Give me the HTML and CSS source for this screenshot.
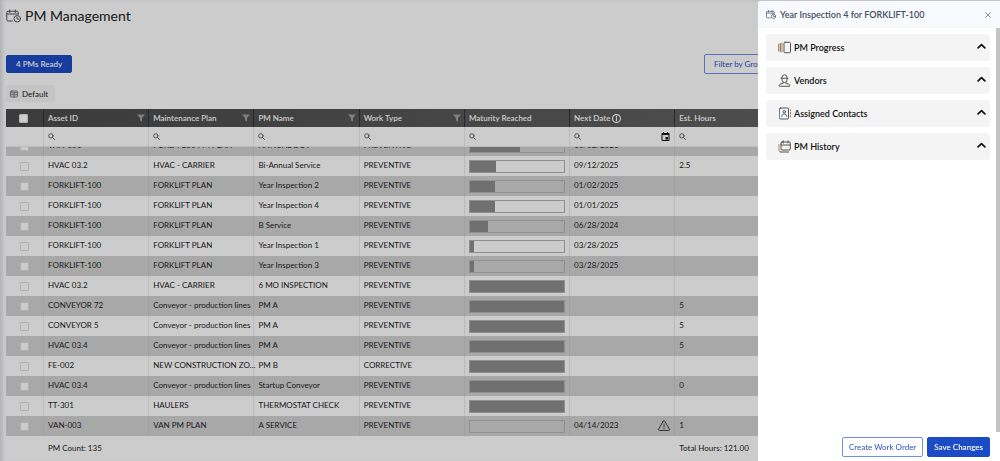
FILE: index.html
```html
<!DOCTYPE html>
<html lang="en">
<head>
<meta charset="utf-8">
<title>PM Management</title>
<link rel="stylesheet" href="styles.css">
</head>
<body>
<svg class="sprite" aria-hidden="true">
  <symbol id="i-search" viewBox="0 0 16 16"><circle cx="6.500" cy="6.500" r="5"/><path d="M10.500 10.500l4.500 4.500"/></symbol>
  <symbol id="i-filter" viewBox="0 0 16 16"><path d="M0 1h16l-6 7v7l-4-2V8z"/></symbol>
  <symbol id="i-calclock" viewBox="0 0 30 26"><path d="M13 23H4a2.500 2.500 0 0 1-2.500-2.500V6A2.500 2.500 0 0 1 4 3.500h18A2.500 2.500 0 0 1 24.500 6v3M1.500 9h23M7.500 1v5M18.500 1v5"/><circle cx="22.500" cy="18.500" r="6.500"/><path d="M22 15v4h3.500"/></symbol>
  <symbol id="i-up" viewBox="0 0 16 10"><path d="M2 8.500l6-6 6 6"/></symbol>
</svg>

<main class="page">
  <h1 class="title"><svg class="title-icon line"><use href="#i-calclock"/></svg>PM Management</h1>
  <div class="toolbar">
    <button class="btn primary" type="button">4 PMs Ready</button>
    <button class="btn outline filter-group" type="button">Filter by Group</button>
  </div>
  <div class="views">
    <button class="view" type="button"><svg class="view-icon line" viewBox="0 0 16 14"><rect x="1" y="1" width="14" height="12" rx="2"/><path d="M1 4.500h14M1 8.500h14M8 4.500V13"/></svg>Default</button>
  </div>

  <section class="grid">
    <table class="cols head">
      <colgroup><col class="c-check"><col class="c"><col class="c"><col class="c"><col class="c"><col class="c"><col class="c"><col></colgroup>
      <thead>
        <tr class="labels">
          <th><input type="checkbox" aria-label="Select all"></th>
          <th><div class="label">Asset ID<svg class="funnel"><use href="#i-filter"/></svg></div></th>
          <th><div class="label">Maintenance Plan<svg class="funnel"><use href="#i-filter"/></svg></div></th>
          <th><div class="label">PM Name<svg class="funnel"><use href="#i-filter"/></svg></div></th>
          <th><div class="label">Work Type<svg class="funnel"><use href="#i-filter"/></svg></div></th>
          <th><div class="label">Maturity Reached</div></th>
          <th><div class="label with-info">Next Date<svg class="info line" viewBox="0 0 16 16"><circle cx="8" cy="8" r="7"/><path d="M8 7v5M8 4v1"/></svg></div></th>
          <th><div class="label">Est. Hours</div></th>
        </tr>
        <tr class="filters">
          <td></td>
          <td><div class="label"><svg class="search line"><use href="#i-search"/></svg></div></td>
          <td><div class="label"><svg class="search line"><use href="#i-search"/></svg></div></td>
          <td><div class="label"><svg class="search line"><use href="#i-search"/></svg></div></td>
          <td><div class="label"><svg class="search line"><use href="#i-search"/></svg></div></td>
          <td><div class="label"><svg class="search line"><use href="#i-search"/></svg></div></td>
          <td><div class="label"><svg class="search line"><use href="#i-search"/></svg><svg class="date" viewBox="0 0 18 18"><path fill-rule="evenodd" d="M4 0h2v2h6V0h2v2h1a2 2 0 0 1 2 2v12a2 2 0 0 1-2 2H3a2 2 0 0 1-2-2V4a2 2 0 0 1 2-2h1zM3 6v10h12V6zM9 10h5v5H9z"/></svg></div></td>
          <td><div class="label"><svg class="search line"><use href="#i-search"/></svg></div></td>
        </tr>
      </thead>
    </table>

    <div class="rows">
      <table class="cols body">
        <colgroup><col class="c-check"><col class="c"><col class="c"><col class="c"><col class="c"><col class="c"><col class="c"><col></colgroup>
        <tbody>
          <tr><td><input type="checkbox" aria-label="Select row"></td><td>VAN-001</td><td>FORD F250 PM PLAN</td><td>ANNUAL DOT</td><td>PREVENTIVE</td><td><div class="bar"><div class="fill" style="width:53%"></div></div></td><td>10/02/2021</td><td></td></tr>
          <tr><td><input type="checkbox" aria-label="Select row"></td><td>HVAC 03.2</td><td>HVAC - CARRIER</td><td>Bi-Annual Service</td><td>PREVENTIVE</td><td><div class="bar"><div class="fill" style="width:28%"></div></div></td><td>09/12/2025</td><td>2.5</td></tr>
          <tr><td><input type="checkbox" aria-label="Select row"></td><td>FORKLIFT-100</td><td>FORKLIFT PLAN</td><td>Year Inspection 2</td><td>PREVENTIVE</td><td><div class="bar"><div class="fill" style="width:27%"></div></div></td><td>01/02/2025</td><td></td></tr>
          <tr><td><input type="checkbox" aria-label="Select row"></td><td>FORKLIFT-100</td><td>FORKLIFT PLAN</td><td>Year Inspection 4</td><td>PREVENTIVE</td><td><div class="bar"><div class="fill" style="width:27%"></div></div></td><td>01/01/2025</td><td></td></tr>
          <tr><td><input type="checkbox" aria-label="Select row"></td><td>FORKLIFT-100</td><td>FORKLIFT PLAN</td><td>B Service</td><td>PREVENTIVE</td><td><div class="bar"><div class="fill" style="width:19%"></div></div></td><td>06/28/2024</td><td></td></tr>
          <tr><td><input type="checkbox" aria-label="Select row"></td><td>FORKLIFT-100</td><td>FORKLIFT PLAN</td><td>Year Inspection 1</td><td>PREVENTIVE</td><td><div class="bar"><div class="fill" style="width:4%"></div></div></td><td>03/28/2025</td><td></td></tr>
          <tr><td><input type="checkbox" aria-label="Select row"></td><td>FORKLIFT-100</td><td>FORKLIFT PLAN</td><td>Year Inspection 3</td><td>PREVENTIVE</td><td><div class="bar"><div class="fill" style="width:4%"></div></div></td><td>03/28/2025</td><td></td></tr>
          <tr><td><input type="checkbox" aria-label="Select row"></td><td>HVAC 03.2</td><td>HVAC - CARRIER</td><td>6 MO INSPECTION</td><td>PREVENTIVE</td><td><div class="bar"><div class="fill" style="width:100%"></div></div></td><td></td><td></td></tr>
          <tr><td><input type="checkbox" aria-label="Select row"></td><td>CONVEYOR 72</td><td>Conveyor - production lines</td><td>PM A</td><td>PREVENTIVE</td><td><div class="bar"><div class="fill" style="width:100%"></div></div></td><td></td><td>5</td></tr>
          <tr><td><input type="checkbox" aria-label="Select row"></td><td>CONVEYOR 5</td><td>Conveyor - production lines</td><td>PM A</td><td>PREVENTIVE</td><td><div class="bar"><div class="fill" style="width:100%"></div></div></td><td></td><td>5</td></tr>
          <tr><td><input type="checkbox" aria-label="Select row"></td><td>HVAC 03.4</td><td>Conveyor - production lines</td><td>PM A</td><td>PREVENTIVE</td><td><div class="bar"><div class="fill" style="width:100%"></div></div></td><td></td><td>5</td></tr>
          <tr><td><input type="checkbox" aria-label="Select row"></td><td>FE-002</td><td>NEW CONSTRUCTION ZO...</td><td>PM B</td><td>CORRECTIVE</td><td><div class="bar"><div class="fill" style="width:100%"></div></div></td><td></td><td></td></tr>
          <tr><td><input type="checkbox" aria-label="Select row"></td><td>HVAC 03.4</td><td>Conveyor - production lines</td><td>Startup Conveyor</td><td>PREVENTIVE</td><td><div class="bar"><div class="fill" style="width:100%"></div></div></td><td></td><td>0</td></tr>
          <tr><td><input type="checkbox" aria-label="Select row"></td><td>TT-301</td><td>HAULERS</td><td>THERMOSTAT CHECK</td><td>PREVENTIVE</td><td><div class="bar"><div class="fill" style="width:100%"></div></div></td><td></td><td></td></tr>
          <tr><td><input type="checkbox" aria-label="Select row"></td><td>VAN-003</td><td>VAN PM PLAN</td><td>A SERVICE</td><td>PREVENTIVE</td><td><div class="bar"></div></td><td><div class="label">04/14/2023<svg class="warn line" viewBox="0 0 24 22"><path d="M10.300 2.500L1.500 18a2 2 0 0 0 1.700 3h17.600a2 2 0 0 0 1.700-3L13.700 2.500a2 2 0 0 0-3.400 0zM12 8v6M12 16.500v1"/></svg></div></td><td>1</td></tr>
        </tbody>
      </table>
    </div>

    <table class="cols foot">
      <colgroup><col class="c-check"><col class="c"><col class="c"><col class="c"><col class="c"><col class="c"><col class="c"><col></colgroup>
      <tbody><tr><td></td><td>PM Count: 135</td><td></td><td></td><td></td><td></td><td></td><td>Total Hours: 121.00</td></tr></tbody>
    </table>
  </section>
</main>

<div class="scrim"></div>

<aside class="drawer" aria-label="PM details">
  <header class="drawer-head">
    <svg class="drawer-icon line"><use href="#i-calclock"/></svg>
    <h2>Year Inspection 4 for FORKLIFT-100</h2>
    <button class="close" type="button" aria-label="Close"><svg class="line" viewBox="0 0 10 10"><path d="M1 1l8 8M9 1l-8 8"/></svg></button>
  </header>
  <div class="drawer-main">
    <div class="cards">
      <button class="card" type="button"><svg class="card-icon line" viewBox="0 0 26 26"><path class="warm" d="M1 7v13"/><path d="M4.500 5v16"/><path class="warm" d="M8 4v18"/><rect x="12" y="2.500" width="13" height="21" rx="2"/></svg>PM Progress<svg class="chev line"><use href="#i-up"/></svg></button>
      <button class="card" type="button"><svg class="card-icon line" viewBox="0 0 26 26"><path d="M6 8.500h14M7.500 8.500a5.500 7 0 0 1 11 0M8 9v3a5 5 0 0 0 10 0V9M10.500 17v1.500L5 20c-2 .6-2.500 2-2.500 4.500h21c0-2.500-.5-3.900-2.500-4.500l-5.500-1.500V17"/></svg>Vendors<svg class="chev line"><use href="#i-up"/></svg></button>
      <button class="card" type="button"><svg class="card-icon line" viewBox="0 0 26 26"><rect x="3" y="2" width="18" height="22" rx="2"/><path class="warm" d="M25 5v3M25 17v3"/><path class="cool" d="M25 11v3M3 4v18"/><circle cx="12.500" cy="9.500" r="2.500"/><path d="M7.500 18.500c0-3 2-4.500 5-4.500s5 1.500 5 4.500"/></svg>Assigned Contacts<svg class="chev line"><use href="#i-up"/></svg></button>
      <button class="card" type="button"><svg class="card-icon line" viewBox="0 0 26 26"><rect x="6" y="4" width="18.500" height="16" rx="2"/><path d="M6 10h18.500M10.500 1.500V6M20 1.500V6M21 24H5"/><path class="warm" d="M5 24a3 3 0 0 1-3-3V9"/></svg>PM History<svg class="chev line"><use href="#i-up"/></svg></button>
    </div>
    <div class="track"></div>
  </div>
  <footer class="drawer-foot">
    <button class="btn outline" type="button">Create Work Order</button>
    <button class="btn primary save" type="button">Save Changes</button>
  </footer>
</aside>
</body>
</html>
```
FILE: styles.css
```css
* { box-sizing: border-box; }
body {
  margin: 0;
  font: 400 8px/12px Lato, "Open Sans", sans-serif;
  color: #222;
  background: #fff;
  overflow: hidden;
}
button { font: inherit; color: inherit; cursor: pointer; }
.sprite { position: absolute; width: 0; height: 0; }
.line { fill: none; stroke: currentColor; stroke-width: 2; stroke-linecap: round; stroke-linejoin: round; }

.page {
  display: flex;
  flex-direction: column;
  height: 100vh;
  padding: 8px 6px 0;
  box-shadow: inset 4px 1px 4px -2px #d4d9e0;
}
.title {
  display: flex;
  align-items: center;
  gap: 4px;
  margin: 0;
  font-size: 14px;
  line-height: 16px;
  font-weight: 400;
}
.title-icon { width: 15px; height: 14px; color: #555; }
.toolbar {
  display: flex;
  align-items: center;
  justify-content: space-between;
  margin-top: 30px;
}
.btn {
  height: 20px;
  padding: 0 6px;
  border: 1px solid #1c4bc6;
  border-radius: 2px;
  line-height: 18px;
}
.toolbar .btn { padding: 0 9px; }
.primary { background: #1c4bc6; color: #fff; }
.toolbar .primary { height: 18px; line-height: 16px; font-weight: 600; }
.outline { background: #fff; color: #2c4fc0; border-color: #6f8fe8; }
.filter-group { width: 80px; margin-right: 210px; white-space: nowrap; text-align: left; }
.views { margin: 11px 0 7px; display: flex; }
.view {
  display: flex;
  align-items: center;
  gap: 4px;
  height: 17px;
  padding: 0 7px 0 4px;
  border: 0;
  border-radius: 3px;
  background: #f5f5f5;
}
.view-icon { width: 8px; height: 8px; color: #777; }

.grid { display: flex; flex-direction: column; flex: 1; min-height: 0; }
.cols { width: 100%; table-layout: fixed; border-collapse: separate; border-spacing: 0; }
.c-check { width: 38px; }
.c { width: 10.65%; }
.cols td, .cols th {
  height: 20px;
  padding: 0 4px;
  text-align: left;
  white-space: nowrap;
  font-weight: inherit;
  border-right: 1px solid #ececec;
}
.cols td:first-child, .cols th:first-child { text-align: center; font-size: 0; padding: 0; }
.cols input {
  appearance: none;
  width: 9px;
  height: 9px;
  margin: 1px 0 0;
  border: 1px solid #dcdcdc;
  border-radius: 1px;
  background: #fff;
  vertical-align: middle;
}
.label { display: flex; align-items: center; justify-content: space-between; }
.with-info { justify-content: flex-start; gap: 2px; }
.labels { background: linear-gradient(90deg, #4a4a4a, #686868); color: #fff; font-weight: 600; }
.cols .labels th { height: 18px; padding-right: 3px; border-color: #333; }
.funnel { width: 8px; height: 8px; fill: #a0a0a0; }
.info { width: 9px; height: 9px; }
.search { width: 7px; height: 7px; color: #555; }
.date { width: 9px; height: 9px; fill: #111; }
.filters td { border-bottom: 1px solid #ececec; }

.rows { flex: 1; min-height: 0; display: flex; align-items: flex-end; overflow: hidden; }
.cols.body td { padding-bottom: 2px; }
.cols.body td:first-child { padding-bottom: 0; }
.body tr:nth-child(odd) { background: #d2d2d2; }
.body tr:nth-child(odd) td { border-color: #cacaca; }
.bar { height: 13px; margin-top: 3px; border: 1px solid #b4b4b4; }
.fill { height: 100%; background: #8c8c8c; }
.warn { width: 12px; height: 11px; color: #444; }
.cols.foot td { height: 25px; border: 0; padding-bottom: 2px; }

.scrim { position: fixed; inset: 0; background: rgba(0, 0, 0, .2); }

.drawer {
  position: fixed;
  top: 1px;
  right: 0;
  bottom: 0;
  width: 242px;
  display: flex;
  flex-direction: column;
  background: #fff;
  border-radius: 3px 0 0 0;
  overflow: hidden;
}
.drawer-head {
  display: flex;
  align-items: center;
  gap: 4px;
  height: 27px;
  padding: 0 8px;
  background: #f8f9fc;
  color: #434e63;
}
.drawer-head h2 { flex: 1; margin: 0; font-size: 9px; font-weight: 600; white-space: nowrap; }
.drawer-icon { width: 10px; height: 9px; }
.close { display: flex; padding: 1px; border: 0; background: none; }
.close svg { width: 6px; height: 6px; stroke-width: 1; }
.drawer-main { display: flex; flex: 1; min-height: 0; }
.cards { flex: 1; display: flex; flex-direction: column; gap: 6px; padding: 6px 6px 0 8px; }
.card {
  display: flex;
  align-items: center;
  gap: 3px;
  height: 27px;
  padding: 0 4px 0 12px;
  border: 0;
  border-radius: 3px;
  background: #f4f4f4;
  color: #111;
  font-size: 9px;
  font-weight: 600;
}
.card-icon { width: 13px; height: 13px; color: #555; }
.warm { stroke: #b98450; }
.cool { stroke: #5685b5; }
.chev { width: 9px; height: 6px; margin: 0 0 3px auto; stroke-width: 3; }
.track { width: 4px; background: #c4c4c4; }
.drawer-foot {
  display: flex;
  align-items: flex-start;
  justify-content: flex-end;
  gap: 4px;
  height: 29px;
  padding: 5px 10px 0;
}
.save { font-weight: 600; }
```
